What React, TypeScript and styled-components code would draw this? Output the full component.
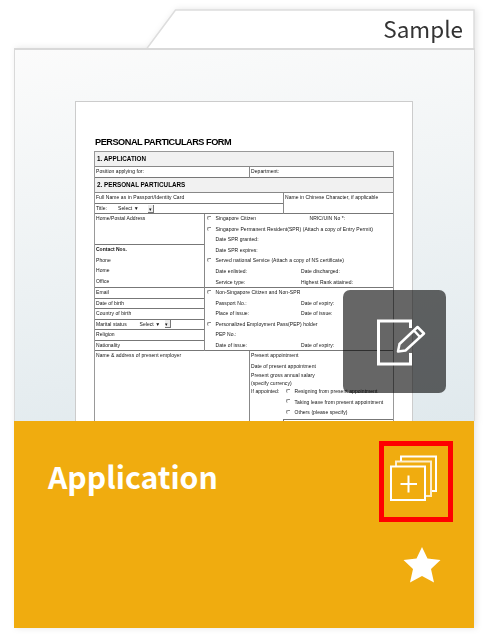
import React from "react";
import styled, { createGlobalStyle } from "styled-components";

const GlobalStyle = createGlobalStyle`
  * { box-sizing: border-box; }
  body { margin: 0; background: #fff; overflow: hidden; }
`;

const Page = styled.main`
  width: 490px;
  height: 643px;
  padding: 9px 0 0 14px;
  background: #fff;
  font-family: "Noto Sans CJK SC", "Open Sans", sans-serif;
`;

const Card = styled.article`
  width: 461px;
  height: 619px;
  display: flex;
  flex-direction: column;
  filter: drop-shadow(2px 0 3px rgba(0, 0, 0, 0.1));
`;

const TabBar = styled.header`
  position: relative;
  flex: none;
  height: 39px;
  display: flex;
  align-items: center;
  justify-content: flex-end;
  padding: 0 12px 1px 0;
  color: #333;
  font-size: 22.5px;
  line-height: 36px;
`;

const TabShape = styled.svg`
  position: absolute;
  left: 0;
  top: 0;
`;

const TabLabel = styled.span`
  position: relative;
`;

const Preview = styled.section`
  position: relative;
  flex: none;
  height: 373px;
  padding: 52px 0 0 60px;
  overflow: hidden;
  border: solid #d9d9d9;
  border-width: 2px 1px 0;
  background: linear-gradient(172deg, #fbfbfb, #f2f5f6 35%, #e0e9ed);
`;

const Paper = styled.div`
  width: 338px;
  height: 330px;
  margin-top: -1px;
  padding: 34px 0 0 18px;
  border: 1px solid #ccc;
  background: #fff;
`;

const Form = styled.div`
  width: 300px;
  color: #111;
  font: 5px/10.5px "Liberation Sans", Arial, sans-serif;
  white-space: nowrap;
  filter: blur(0.45px);
`;

const FormTitle = styled.h1`
  margin: 0;
  height: 15px;
  font-size: 9.2px;
  line-height: 12px;
  font-weight: bold;
  letter-spacing: -0.48px;
  padding-left: 1px;
  color: #000;
`;

const Table = styled.div`
  border: solid #999;
  border-width: 1px 1.5px 0;
`;

const Heading = styled.div<{ $h: number }>`
  height: ${(p) => p.$h}px;
  padding-left: 2px;
  border-bottom: 1px solid #888;
  background: #f1f1f1;
  color: #000;
  font-size: 6.3px;
  font-weight: bold;
  line-height: 14.5px;
`;

const Columns = styled.div<{ $left: number; $h: number }>`
  display: grid;
  grid-template-columns: ${(p) => p.$left}px 1fr;
  height: ${(p) => p.$h}px;
  border-bottom: 1px solid #777;
`;

const Cell = styled.div<{ $divider?: boolean }>`
  min-width: 0;
  padding-left: 1px;
  border-left: ${(p) => (p.$divider ? "1px solid #888" : "0")};
`;

const Box = styled.div<{ $h: number; $last?: boolean }>`
  height: ${(p) => p.$h}px;
  margin-left: -1px;
  padding-left: 1px;
  border-bottom: ${(p) => (p.$last ? "0" : "1px solid #777")};
`;

const Line = styled.div<{ $h?: number; $bold?: boolean }>`
  display: flex;
  align-items: center;
  height: ${(p) => p.$h ?? 10.55}px;
  padding-bottom: 1.6px;
  font-weight: ${(p) => (p.$bold ? "bold" : "normal")};
  letter-spacing: ${(p) => (p.$bold ? "0" : "0.07px")};
`;

const Marker = styled.span<{ $on?: boolean }>`
  flex: none;
  width: 4px;
  height: 4px;
  margin: 0 4.5px 1px 1px;
  border: solid ${(p) => (p.$on ? "#888" : "transparent")};
  border-width: 1px 0 0 1px;
  border-radius: 3px 0 0 3px;
`;

const Label = styled.span<{ $w?: number }>`
  flex: none;
  width: ${(p) => (p.$w ? p.$w + "px" : "auto")};
`;

const Arrow = styled.span`
  width: 6px;
  height: 8px;
  margin-top: 1px;
  border: solid #777;
  border-width: 0 1px 1px 0;
  background: #eee;
  text-align: center;
  font-size: 5px;
  line-height: 9px;
`;

const InnerBox = styled.div`
  height: 10px;
  margin: 0.5px 0 0 32px;
  border: solid #777;
  border-width: 1px 0 0 1px;
`;

const EditButton = styled.button`
  position: absolute;
  left: 328px;
  top: 240px;
  width: 103px;
  height: 103px;
  padding: 0;
  border: 0;
  border-radius: 7px;
  background: rgba(0, 0, 0, 0.6);
  svg { display: block; }
`;

const Footer = styled.footer`
  display: flex;
  justify-content: space-between;
  height: 207px;
  width: 460px;
  padding: 20px 21px 0 34px;
  background: #f0ac0f;
  color: #fff;
`;

const Title = styled.h2`
  margin: 12px 0 0;
  height: 46px;
  font-size: 30.2px;
  line-height: 46px;
  font-weight: bold;
`;

const Actions = styled.div`
  display: flex;
  flex-direction: column;
  align-items: flex-end;
  gap: 24px;
`;

const Highlight = styled.div`
  width: 74px;
  height: 81px;
  border: 5px solid #f00;
  svg { display: block; }
`;

const Star = styled.svg`
  margin-right: 11.5px;
`;

type Row = { text: string; radio?: boolean; second?: string; w?: number };

const residency: Row[] = [
  { text: "Singapore Citizen", radio: true, second: "NRIC/UIN No *:", w: 94 },
  { text: "Singapore Permanent Resident(SPR) (Attach a copy of Entry Permit)", radio: true },
  { text: "Date SPR granted:" },
  { text: "Date SPR expires:" },
  { text: "Served national Service (Attach a copy of NS certificate)", radio: true },
  { text: "Date enlisted:", second: "Date discharged:" },
  { text: "Service type:", second: "Highest Rank attained:" },
];

const foreign: Row[] = [
  { text: "Non-Singapore Citizen and Non-SPR", radio: true },
  { text: "Passport No.:", second: "Date of expiry:" },
  { text: "Place of issue:", second: "Date of issue:" },
  { text: "Personalized Employment Pass(PEP) holder", radio: true },
  { text: "PEP No.:" },
  { text: "Date of issue:", second: "Date of expiry:" },
];

const Rows = ({ rows }: { rows: Row[] }) => (
  <>
    {rows.map((r, i) => (
      <Line key={i}>
        <Marker $on={r.radio} />
        <Label $w={r.second ? r.w ?? 85.5 : undefined}>{r.text}</Label>
        {r.second && <Label>{r.second}</Label>}
      </Line>
    ))}
  </>
);

const ApplicationForm = () => (
  <Form>
    <FormTitle>PERSONAL PARTICULARS FORM</FormTitle>
    <Table>
      <Heading $h={15}>1. APPLICATION</Heading>
      <Columns $left={154} $h={11}>
        <Cell><Line>Position applying for:</Line></Cell>
        <Cell $divider><Line>Department:</Line></Cell>
      </Columns>
      <Heading $h={15}>2. PERSONAL PARTICULARS</Heading>
      <Columns $left={188} $h={21}>
        <Cell>
          <Box $h={11}><Line>Full Name as in Passport/Identity Card</Line></Box>
          <Line $h={10}>
            <Label $w={22}>Title:</Label>
            <Label $w={30}>Select ▼</Label>
            <Arrow>▾</Arrow>
          </Line>
        </Cell>
        <Cell $divider><Line>Name in Chinese Character, if applicable</Line></Cell>
      </Columns>
      <Columns $left={109} $h={74}>
        <Cell>
          <Box $h={31}><Line>Home/Postal Address</Line></Box>
          <Line $bold>Contact Nos.</Line>
          <Line>Phone</Line>
          <Line>Home</Line>
          <Line>Office</Line>
        </Cell>
        <Cell $divider><Rows rows={residency} /></Cell>
      </Columns>
      <Columns $left={109} $h={63}>
        <Cell>
          <Box $h={10.5}><Line>Email</Line></Box>
          <Box $h={10.5}><Line>Date of birth</Line></Box>
          <Box $h={10.5}><Line>Country of birth</Line></Box>
          <Box $h={10.5}>
            <Line>
              <Label $w={43.5}>Marital status</Label>
              <Label $w={25}>Select ▼</Label>
              <Arrow>▾</Arrow>
            </Line>
          </Box>
          <Box $h={10.5}><Line>Religion</Line></Box>
          <Box $h={10.5} $last><Line>Nationality</Line></Box>
        </Cell>
        <Cell $divider><Rows rows={foreign} /></Cell>
      </Columns>
      <Columns $left={154} $h={90}>
        <Cell><Line $h={10.5}>Name &amp; address of present employer</Line></Cell>
        <Cell $divider>
          <Line $h={10.5}>Present appointment</Line>
          <Line $h={10.5}>Date of present appointment</Line>
          <Line $h={8.5}>Present gross annual salary</Line>
          <Line $h={6.5}>(specify currency)</Line>
          <Line $h={10.5}>
            <Label $w={34}>If appointed:</Label><Marker $on />
            Resigning from present appointment
          </Line>
          <Line><Label $w={34} /><Marker $on />Taking leave from present appointment</Line>
          <Line><Label $w={34} /><Marker $on />Others (please specify)</Line>
          <InnerBox />
        </Cell>
      </Columns>
    </Table>
  </Form>
);

const App = () => (
  <>
    <GlobalStyle />
    <Page>
      <Card>
        <TabBar>
          <TabShape width="461" height="40" aria-hidden="true">
            <path d="M132.5 40 L161.5 1 H460 V40 Z" fill="#fff" />
            <path d="M132.5 40 L161.5 1 H460 V40" fill="none" stroke="#ddd" strokeWidth="1.5" />
          </TabShape>
          <TabLabel>Sample</TabLabel>
        </TabBar>
        <Preview>
          <Paper><ApplicationForm /></Paper>
          <EditButton aria-label="Edit form">
            <svg width="103" height="103" viewBox="0 0 103 103" fill="none" stroke="#fff">
              <path d="M67.5 38 V31 H35.5 V74 H67.5 V63" strokeWidth="3" />
              <path d="M55 61.5 L56.5 54 L74.5 37 L81 43.5 L62.5 60.5 Z M71 40.5 L77 47" strokeWidth="2.5" strokeLinejoin="round" />
            </svg>
          </EditButton>
        </Preview>
        <Footer>
          <Title>Application</Title>
          <Actions>
            <Highlight>
              <svg width="64" height="71" viewBox="0 0 64 71" fill="none" stroke="#fff" strokeWidth="2">
                <path d="M17 15 V10.5 H52 V45 H48" />
                <path d="M12 20 V15.5 H47 V50 H42" opacity="0.8" />
                <path d="M7 20.5 H41 V54 H7 Z M24.5 29.5 V46.5 M16.5 38 H33" />
              </svg>
            </Highlight>
            <Star width="40" height="38" viewBox="0 0 40 38" aria-label="Favourite">
              <path d="M20 1 L25.5 12.5 L38.5 14 L29 23 L32 36.5 L20 30 L8 36.5 L11 23 L1.5 14 L14.5 12.5 Z" fill="#fff" />
            </Star>
          </Actions>
        </Footer>
      </Card>
    </Page>
  </>
);

export default App;
